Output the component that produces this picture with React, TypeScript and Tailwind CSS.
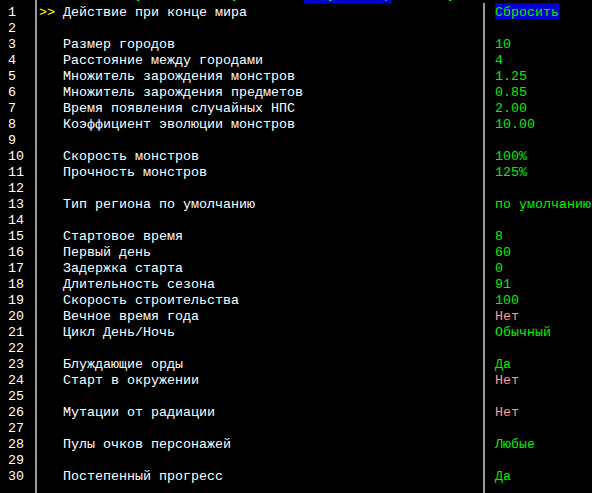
const rows: { label?: string; value?: string; tone?: 'green' | 'red' | 'reset' }[] = [
  { label: 'Действие при конце мира', value: 'Сбросить', tone: 'reset' },
  {},
  { label: 'Размер городов', value: '10' },
  { label: 'Расстояние между городами', value: '4' },
  { label: 'Множитель зарождения монстров', value: '1.25' },
  { label: 'Множитель зарождения предметов', value: '0.85' },
  { label: 'Время появления случайных НПС', value: '2.00' },
  { label: 'Коэффициент эволюции монстров', value: '10.00' },
  {},
  { label: 'Скорость монстров', value: '100%' },
  { label: 'Прочность монстров', value: '125%' },
  {},
  { label: 'Тип региона по умолчанию', value: 'по умолчанию' },
  {},
  { label: 'Стартовое время', value: '8' },
  { label: 'Первый день', value: '60' },
  { label: 'Задержка старта', value: '0' },
  { label: 'Длительность сезона', value: '91' },
  { label: 'Скорость строительства', value: '100' },
  { label: 'Вечное время года', value: 'Нет', tone: 'red' },
  { label: 'Цикл День/Ночь', value: 'Обычный' },
  {},
  { label: 'Блуждающие орды', value: 'Да' },
  { label: 'Старт в окружении', value: 'Нет', tone: 'red' },
  {},
  { label: 'Мутации от радиации', value: 'Нет', tone: 'red' },
  {},
  { label: 'Пулы очков персонажей', value: 'Любые' },
  {},
  { label: 'Постепенный прогресс', value: 'Да' },
];

export default function App() {
  return (
    <div
      className="h-screen bg-black flex text-[13.33px] leading-[16px] whitespace-pre overflow-hidden"
      style={{ fontFamily: '"Liberation Mono", "DejaVu Sans Mono", monospace' }}
    >
      {/* line numbers */}
      <div className="w-[35px] shrink-0 pl-2 pt-[3px] text-white">
        {rows.map((_, i) => (
          <div key={i} className="h-4 leading-[20px]">{i + 1}</div>
        ))}
      </div>

      {/* option names */}
      <div className="w-[448px] shrink-0 border-l-2 border-[#9a9a9a] pl-[2px]">
        {/* tab bar, mostly scrolled off */}
        <div className="h-[3px] overflow-hidden -ml-[39px]">
          <div className="-mt-[13px] flex text-[#00f000]">
            <span>{'                 у           у        '}</span>
            <span className="bg-[#0000d0]">{'   у      р'}</span>
            <span>{'       у'}</span>
          </div>
        </div>
        {rows.map((r, i) => (
          <div key={i} className="h-4 leading-[20px] text-white">
            <span className="text-[#ffff00]">{i === 0 ? '>> ' : '   '}</span>
            {r.label ?? ''}
          </div>
        ))}
      </div>

      {/* values */}
      <div className="flex-1 mt-[3px] border-l-2 border-[#9a9a9a] pl-[10px]">
        {rows.map((r, i) =>
          r.tone === 'reset' ? (
            <div key={i} className="h-4 w-fit leading-[20px] bg-[#0000d0] text-[#00f000]">
              {r.value}
            </div>
          ) : (
            <div
              key={i}
              className={`h-4 leading-[20px] ${r.tone === 'red' ? 'text-[#ff9696]' : 'text-[#00f000]'}`}
            >
              {r.value ?? ''}
            </div>
          )
        )}
      </div>
    </div>
  );
}
